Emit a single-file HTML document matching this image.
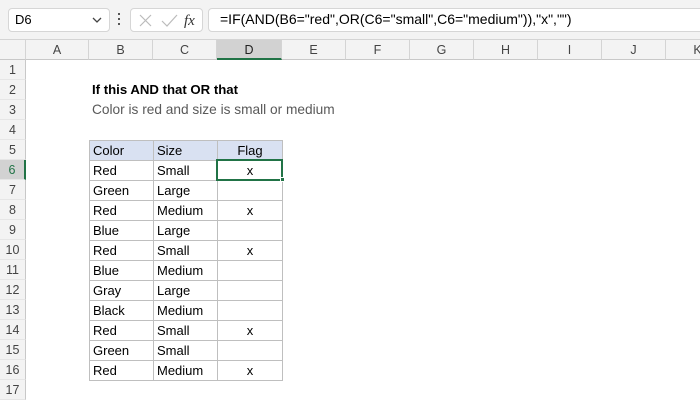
<!DOCTYPE html>
<html><head><style>
*{margin:0;padding:0;box-sizing:border-box}
body{width:700px;height:400px;overflow:hidden;background:#fff;font-family:"Liberation Sans",Calibri,sans-serif;position:relative;font-size:13px;color:#000}
.a{position:absolute}
.top{left:0;top:0;width:700px;height:40px;background:#f3f3f3;border-bottom:1px solid #d4d4d4}
.box{background:#fff;border:1px solid #d6d6d6;border-radius:4px}
.ch{top:40px;height:20px;background:#f3f3f3;border-right:1px solid #d4d4d4;border-bottom:1px solid #c8c8c8;text-align:center;line-height:20px;color:#444;font-size:12.5px}
.rh{left:0;width:26px;height:20px;background:#f3f3f3;border-right:1px solid #c8c8c8;border-bottom:1px solid #e6e6e6;text-align:center;line-height:20px;color:#444;font-size:12.5px}
.c{height:21px;border:1px solid #bfbfbf;line-height:19px;padding-left:3px;font-size:13px}
</style></head><body>
<div class="a top"></div>
<div class="a box" style="left:8px;top:8px;width:102px;height:24px"></div>
<div class="a" style="left:15px;top:12px;font-size:13px">D6</div>
<svg class="a" style="left:92px;top:16px" width="10" height="8"><path d="M1 2 L5 6 L9 2" stroke="#444" fill="none" stroke-width="1.3"/></svg>
<div class="a" style="left:118px;top:13px;width:2px;height:2px;background:#555;box-shadow:0 5px #555,0 10px #555"></div>
<div class="a box" style="left:130px;top:8px;width:73px;height:24px"></div>
<svg class="a" style="left:138px;top:13px" width="60" height="16"><path d="M2 2 L13 13 M13 2 L2 13" stroke="#bbb" stroke-width="1.2"/><path d="M24 8 L29 13 L39 2" stroke="#bbb" fill="none" stroke-width="1.2"/><text x="46" y="12" font-family="Liberation Serif" font-style="italic" font-size="15" fill="#333">fx</text></svg>
<div class="a box" style="left:208px;top:8px;width:500px;height:24px"></div>
<div class="a" style="left:220px;top:11px;font-size:14px">=IF(AND(B6="red",OR(C6="small",C6="medium")),"x","")</div>
<div class="a ch" style="left:0;width:26px"></div>
<div class="a ch" style="left:26px;width:63px">A</div>
<div class="a ch" style="left:89px;width:64px">B</div>
<div class="a ch" style="left:153px;width:64px">C</div>
<div class="a ch" style="left:217px;width:65px;background:#d2d2d2;border-bottom:2px solid #217346;color:#222">D</div>
<div class="a ch" style="left:282px;width:64px">E</div>
<div class="a ch" style="left:346px;width:64px">F</div>
<div class="a ch" style="left:410px;width:64px">G</div>
<div class="a ch" style="left:474px;width:64px">H</div>
<div class="a ch" style="left:538px;width:64px">I</div>
<div class="a ch" style="left:602px;width:64px">J</div>
<div class="a ch" style="left:666px;width:64px">K</div>
<div class="a rh" style="top:60px">1</div><div class="a rh" style="top:80px">2</div><div class="a rh" style="top:100px">3</div><div class="a rh" style="top:120px">4</div><div class="a rh" style="top:140px">5</div>
<div class="a rh" style="top:160px;background:#d2d2d2;border-right:2px solid #217346;color:#217346">6</div>
<div class="a rh" style="top:180px">7</div><div class="a rh" style="top:200px">8</div><div class="a rh" style="top:220px">9</div><div class="a rh" style="top:240px">10</div><div class="a rh" style="top:260px">11</div><div class="a rh" style="top:280px">12</div><div class="a rh" style="top:300px">13</div><div class="a rh" style="top:320px">14</div><div class="a rh" style="top:340px">15</div><div class="a rh" style="top:360px">16</div><div class="a rh" style="top:380px">17</div>
<div class="a" style="left:92px;top:82px;font-weight:bold;font-size:13.2px">If this AND that OR that</div>
<div class="a" style="left:92px;top:102px;color:#595959;font-size:13.7px">Color is red and size is small or medium</div>
<div id="t"></div>
<script>
var d=[["Color","Size","Flag"],["Red","Small","x"],["Green","Large",""],["Red","Medium","x"],["Blue","Large",""],["Red","Small","x"],["Blue","Medium",""],["Gray","Large",""],["Black","Medium",""],["Red","Small","x"],["Green","Small",""],["Red","Medium","x"]];
var xs=[89,153,217,282],h="";
d.forEach(function(r,i){var y=140+i*20;for(var j=0;j<3;j++){var bg=i==0?"background:#d9e1f2;":"";var al=j==2?"text-align:center;padding-left:0;":"";h+='<div class="a c" style="left:'+xs[j]+'px;top:'+y+'px;width:'+(xs[j+1]-xs[j]+1)+'px;'+bg+al+'">'+r[j]+'</div>';}});
h+='<div class="a" style="left:216px;top:159px;width:67px;height:22px;border:2px solid #217346"></div><div class="a" style="left:280px;top:177px;width:5px;height:5px;background:#217346;border:1px solid #fff"></div>';
document.getElementById("t").innerHTML=h;
</script>
</body></html>
